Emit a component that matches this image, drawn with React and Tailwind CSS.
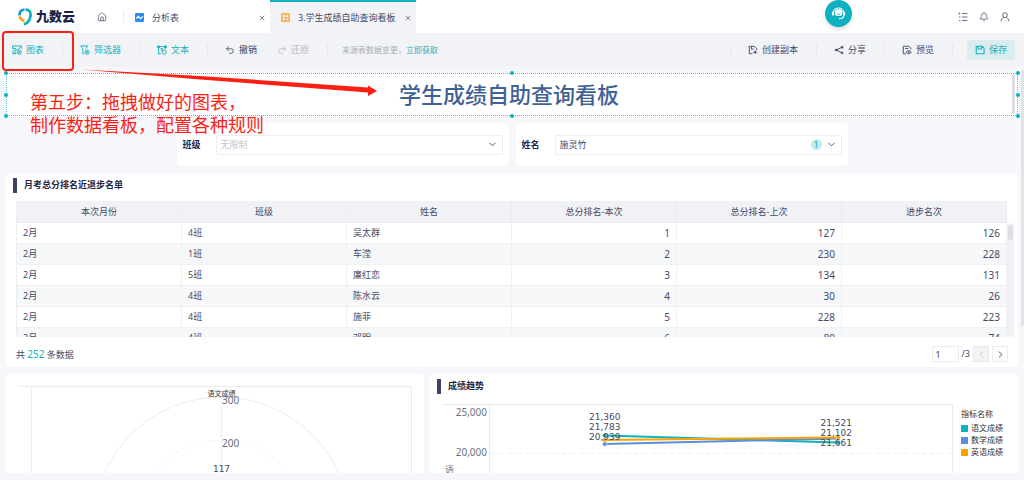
import React, { useState } from 'react';
import { House, Bell, X, Undo2, Redo2, ChevronDown, ChevronLeft, ChevronRight } from 'lucide-react';

const COLUMNS = ['本次月份', '班级', '姓名', '总分排名-本次', '总分排名-上次', '进步名次'];

const ROWS = [
  ['2月', '4班', '吴太群', 1, 127, 126],
  ['2月', '1班', '车滢', 2, 230, 228],
  ['2月', '5班', '廉红恋', 3, 134, 131],
  ['2月', '4班', '陈水云', 4, 30, 26],
  ['2月', '4班', '施菲', 5, 228, 223],
  ['2月', '4班', '邓明', 6, 80, 74],
];

const LEGEND = [
  { name: '语文成绩', color: 'bg-[#0fb1c0]' },
  { name: '数学成绩', color: 'bg-[#5b8fdc]' },
  { name: '英语成绩', color: 'bg-[#ffa200]' },
];

/* ───── ícones ───── */
function Svg({ children, className = 'size-[10px]', width = 1.5 }) {
  return (
    <svg
      viewBox="0 0 16 16"
      fill="none"
      stroke="currentColor"
      strokeWidth={width}
      className={`shrink-0 ${className}`}
      aria-hidden="true"
    >
      {children}
    </svg>
  );
}

const ChartIcon = () => (
  <Svg>
    <path d="M15 6V1.500H1V5.500H5V14M1 14H7M1.500 8.500V14M5 5.500L8.500 8L14 3" />
    <circle cx="11.500" cy="11.500" r="3.300" />
    <path d="M11.500 10V13M10 11.500H13" />
  </Svg>
);

const FilterIcon = () => (
  <Svg>
    <path d="M9.500 6V5L12.500 1.500H1L4.500 6V14H7" />
    <circle cx="11.500" cy="11.500" r="3.300" />
    <path d="M11.500 10V13M10 11.500H13" />
  </Svg>
);

const TextIcon = () => (
  <Svg>
    <path d="M2.500 3.500V14M1 14H6M3 2.500H13V7M5.500 6H10M7.500 6V10" />
    <path d="M1 1.500H4V4H1ZM12 1.500H15V4H12Z" fill="currentColor" />
    <circle cx="11.500" cy="11.500" r="3.300" />
  </Svg>
);

const CopyIcon = () => (
  <Svg>
    <path d="M7 14H2V2H10L14 6V8M5.500 2V6.500H9M8 11.500H14.500M11.500 8.500V14.500" />
  </Svg>
);

const ShareIcon = () => (
  <Svg>
    <path d="M13 3.500L3.500 8L13 12.500" />
    <path d="M2 6.500H5V9.500H2ZM11.500 2H14.500V5H11.500ZM11.500 11H14.500V14H11.500Z" fill="currentColor" strokeWidth="0.500" />
  </Svg>
);

const PreviewIcon = () => (
  <Svg>
    <path d="M6 14H2V2H11L14 5V7M5 5.500H10" />
    <path d="M6.500 11.500C8.500 8.300 13 8.300 15 11.500C13 14.700 8.500 14.700 6.500 11.500Z" />
    <circle cx="10.800" cy="11.500" r="1" />
  </Svg>
);

const SaveIcon = () => (
  <Svg width={1.700}>
    <path d="M2 2H11.500L14.500 5V14H2ZM5 2V6.500H10.500V2" />
  </Svg>
);

const TaskIcon = () => (
  <Svg>
    <path d="M6.500 2.500H15M6.500 8H15M6.500 13.500H15M1 1L3.500 2.500L1 4M1.500 8H4M1.500 13.500H4" />
  </Svg>
);

const UserIcon = () => (
  <Svg>
    <circle cx="8" cy="5" r="3.800" />
    <path d="M1.500 15C2 11.500 4 9.500 6 8.500M14.500 15C14 11.500 12 9.500 10 8.500" />
  </Svg>
);

const Logo = () => (
  <svg viewBox="0 0 28 36" fill="none" strokeWidth="5.500" className="h-[18px] w-[14px]" aria-hidden="true">
    <path d="M3 15C2.500 8 6 3.500 13 3" stroke="#1b96dc" />
    <path d="M15 3C22 3 26 8 25 16C24 24 20 30 12 33" stroke="#12afc1" />
    <path d="M3 17C5 22 8 25 13 26" stroke="#fba026" />
  </svg>
);

/* ───── barra superior ───── */
function Tab({ active, icon, children }) {
  return (
    <div
      className={`flex w-[146px] items-center gap-2 border-t-2 pr-1 pl-[11px] ${
        active ? 'border-[#0fb1c0] bg-[#f1f3f7]' : 'border-transparent'
      }`}
    >
      {icon}
      <a href="#tab" className="flex-1 whitespace-nowrap">
        {children}
      </a>
      <button aria-label="关闭">
        <X className="size-2" />
      </button>
    </div>
  );
}

function Header() {
  return (
    <header className="relative flex h-[33px] bg-white">
      <div className="flex items-center gap-1 pl-[18px]">
        <Logo />
        <span className="text-[13px] font-black text-[#1b1f45]">九数云</span>
      </div>
      <button className="ml-[22px] w-[10px]" aria-label="首页">
        <House className="size-[10px] text-[#5b607c]" />
      </button>
      <span className="my-[10px] ml-4 w-px bg-[#e8eaef]" />
      <Tab
        icon={
          <svg viewBox="0 0 8 8" className="size-[9px]" aria-hidden="true">
            <rect width="8" height="8" rx="1" fill="#2a8cf0" />
            <path d="M1 5L3 3L5 5L7 3" stroke="#fff" fill="none" />
          </svg>
        }
      >
        分析表
      </Tab>
      <Tab
        active
        icon={
          <svg viewBox="0 0 8 8" className="size-[9px]" aria-hidden="true">
            <rect width="8" height="8" rx="1" fill="#fbb04f" />
            <path d="M1.500 1.500H3.500V3.500H1.500ZM4.500 1.500H6.500V4H4.500ZM1.500 4.500H3.500V6.500H1.500ZM4.500 5H6.500V6.500H4.500Z" fill="#fff3dd" />
          </svg>
        }
      >
        3.学生成绩自助查询看板
      </Tab>
      <div className="ml-auto flex items-center gap-[11px] pr-[14px] text-[#5b607c]">
        <button aria-label="任务">
          <TaskIcon />
        </button>
        <button aria-label="通知">
          <Bell className="size-[10px]" />
        </button>
        <button aria-label="账户">
          <UserIcon />
        </button>
      </div>
      <button
        aria-label="客服"
        className="absolute top-0 right-[172px] flex size-[27px] items-center justify-center rounded-full bg-[#0fb1c0] text-white shadow-md"
      >
        <svg viewBox="0 0 16 16" fill="none" stroke="currentColor" className="size-[15px]" aria-hidden="true">
          <rect x="4.500" y="4" width="7" height="6" rx="1.500" fill="currentColor" />
          <path d="M2.500 7C2.500 0.500 13.500 0.500 13.500 7V10C13.500 12.500 11.500 13.500 8.500 13.500" strokeWidth="1.200" />
          <path d="M2 6V10M14 6V10" strokeWidth="2" />
          <path d="M6 8C7 9.200 9 9.200 10 8" stroke="#0fb1c0" />
        </svg>
      </button>
    </header>
  );
}

/* ───── ferramentas ───── */
function Tool({ icon, children, className = '' }) {
  return (
    <button className={`flex items-center gap-1 whitespace-nowrap ${className}`}>
      {icon}
      {children}
    </button>
  );
}

const Divider = () => <span className="mr-[17px] ml-[18px] h-3 w-px bg-[#e6e8ee]" />;

function Toolbar() {
  return (
    <div className="flex h-[34px] items-center bg-[#f1f3f7] pr-[9px] pl-3">
      <Tool icon={<ChartIcon />} className="text-[#18b0be]">图表</Tool>
      <Divider />
      <Tool icon={<FilterIcon />} className="text-[#18b0be]">筛选器</Tool>
      <Divider />
      <Tool icon={<TextIcon />} className="text-[#18b0be]">文本</Tool>
      <Divider />
      <Tool icon={<Undo2 className="size-[10px]" />}>撤销</Tool>
      <Tool icon={<Redo2 className="size-[10px]" />} className="ml-5 text-[#b9bcc8]">还原</Tool>
      <span className="mr-[14px] ml-[18px] h-3 w-px bg-[#e6e8ee]" />
      <p className="text-[8px] whitespace-nowrap text-[#a9adbb]">
        来源表数据变更，<a href="#update" className="text-[#18b0be]">立即获取</a>
      </p>
      <span className="ml-auto" />
      <Divider />
      <Tool icon={<CopyIcon />}>创建副本</Tool>
      <Divider />
      <Tool icon={<ShareIcon />}>分享</Tool>
      <Divider />
      <Tool icon={<PreviewIcon />}>预览</Tool>
      <span className="mr-[14px] ml-[18px] h-3 w-px bg-[#e6e8ee]" />
      <Tool icon={<SaveIcon />} className="h-5 rounded-xs bg-[#d9ecf0] px-2 text-[#18b0be]">保存</Tool>
    </div>
  );
}

/* ───── painel ───── */
const HANDLES = [
  '-top-[3px] -left-[3px]',
  '-top-[3px] left-1/2 -ml-0.5',
  '-top-[3px] -right-[3px]',
  'top-1/2 -mt-0.5 -left-[3px]',
  'top-1/2 -mt-0.5 -right-[3px]',
  '-bottom-[3px] -left-[3px]',
  '-bottom-[3px] left-1/2 -ml-0.5',
  '-bottom-[3px] -right-[3px]',
];

function TitleWidget() {
  return (
    <div className="relative flex h-[43px] items-center justify-center border border-dotted border-[#4cc3cf] bg-white pr-[6px]">
      <h1 className="text-[22px] font-medium text-[#3f6294]">学生成绩自助查询看板</h1>
      <span className="absolute top-0 right-0.5 h-10 w-[3px] rounded-full bg-[#dcdde2]" />
      {HANDLES.map((pos) => (
        <span key={pos} className={`absolute size-1 rounded-full bg-[#0fb1c0] ${pos}`} />
      ))}
    </div>
  );
}

function FilterCard({ id, label, value, muted, count }) {
  return (
    <div className="flex h-[43px] w-[332px] items-center rounded-sm bg-white px-[6px]">
      <label htmlFor={id} className="w-[33px] font-bold text-[#22264a]">
        {label}
      </label>
      <div className="relative flex-1">
        <select
          id={id}
          className={`block h-5 w-full appearance-none rounded-xs border border-[#eceef2] bg-white px-1 ${
            muted ? 'text-[#c3c6d0]' : ''
          }`}
        >
          <option>{value}</option>
        </select>
        <span className="pointer-events-none absolute inset-y-0 right-[5px] flex items-center gap-1">
          {count && (
            <span className="flex size-[11px] items-center justify-center rounded-full bg-[#c5ebef] text-[#18b0be]">
              {count}
            </span>
          )}
          <ChevronDown className="size-[11px]" />
        </span>
      </div>
    </div>
  );
}

function CardTitle({ children }) {
  return (
    <div className="flex h-7 items-center gap-[7px] pb-1 pl-[7px]">
      <span className="h-[15px] w-1 bg-[#3d4266]" />
      <h2 className="font-bold text-[#22264a]">{children}</h2>
    </div>
  );
}

function RankTable() {
  const [page, setPage] = useState(1);

  return (
    <section className="rounded-sm bg-white">
      <CardTitle>月考总分排名近退步名单</CardTitle>
      <div className="flex h-[136px] overflow-hidden pr-1 pl-[10px]">
        <div className="flex-1">
          <table className="w-full table-fixed border-separate border-spacing-0 border-l border-[#eceef2]">
            <thead>
              <tr className="h-[22px] bg-[#f0f2f6]">
                {COLUMNS.map((c) => (
                  <th key={c} className="border-r border-b border-[#eaecf1] p-0 font-normal">
                    {c}
                  </th>
                ))}
              </tr>
            </thead>
            <tbody>
              {ROWS.map((row, i) => (
                <tr key={i} className="h-[21px] odd:bg-white even:bg-[#f5f7f9]">
                  {row.map((cell, j) => (
                    <td
                      key={j}
                      className={`border-r border-b border-[#eff1f4] px-[6px] py-0 ${
                        j > 2 ? 'text-right text-[10px]' : ''
                      }`}
                    >
                      {cell}
                    </td>
                  ))}
                </tr>
              ))}
            </tbody>
          </table>
        </div>
        <div className="mt-[22px] w-[7px] rounded-full bg-[#f2f2f4] px-px pt-0.5">
          <div className="h-[15px] rounded-full bg-[#dedfe3]" />
        </div>
      </div>
      <div className="flex h-[30px] items-center pt-1 pr-[10px] pl-[10px]">
        <p>
          共 <span className="text-[10px] text-[#18b0be]">252</span> 条数据
        </p>
        <input
          aria-label="页码"
          value={page}
          onChange={(e) => setPage(e.target.value)}
          className="ml-auto h-4 w-[27px] border border-[#e9ebef] px-[3px]"
        />
        <span className="mr-[3px] ml-[3px]">/3</span>
        <button aria-label="上一页" disabled className="flex size-4 items-center justify-center border border-[#e6e7eb] bg-[#f3f3f5] text-[#c3c6d0]">
          <ChevronLeft className="size-[11px]" />
        </button>
        <button aria-label="下一页" className="ml-[3px] flex size-4 items-center justify-center border border-[#e9ebef]">
          <ChevronRight className="size-[11px]" />
        </button>
      </div>
    </section>
  );
}

function RadarCard() {
  return (
    <section className="overflow-hidden rounded-t-sm bg-white px-3">
      <svg viewBox="0 0 394 120" className="w-full" fill="none" stroke="#ebecef">
        <path d="M0 12.500H394M13.500 12.500V120M393.500 12.500V120M203.500 23V120" />
        <circle cx="203.500" cy="151" r="128" />
        <circle cx="203.500" cy="151" r="85" stroke="#f2f3f5" strokeDasharray="5 4" />
        <g stroke="none">
          <text x="203.500" y="22" fontSize="7" textAnchor="middle" fill="#333">语文成绩</text>
          <text x="204" y="30" fontSize="10" fill="#6e7079">300</text>
          <text x="204" y="73" fontSize="10" fill="#6e7079">200</text>
          <text x="203.500" y="98" fontSize="9" textAnchor="middle" fill="#454a5c" className="font-['DejaVu_Sans']">
            117
          </text>
        </g>
      </svg>
    </section>
  );
}

function TrendCard() {
  return (
    <section className="overflow-hidden rounded-t-sm bg-white">
      <CardTitle>成绩趋势</CardTitle>
      <div className="flex items-start gap-2 pr-[15px] pl-3">
        <svg viewBox="0 0 512 90" className="min-w-0 flex-1" fill="none" stroke="#e8eaed">
          <path d="M0 2.500H512M47.500 2.500V90M511.500 2.500V90" />
          <path d="M48 51.500H511" stroke="#f0f1f3" strokeDasharray="5 4" />
          <g stroke="none" fontSize="10" fill="#6e7079" textAnchor="end">
            <text x="45" y="14">25,000</text>
            <text x="45" y="54">20,000</text>
            <text x="12" y="71" fontSize="9">语</text>
          </g>
          <g strokeWidth="2">
            <path d="M163 33.500L397 40.500" stroke="#0fb1c0" />
            <path d="M163 42L397 36.500" stroke="#5b8fdc" />
            <path d="M163 38L397 35.500" stroke="#ffa200" />
          </g>
          <g stroke="#fff" strokeWidth="0.500">
            <circle cx="163" cy="33.500" r="2.300" fill="#0fb1c0" />
            <circle cx="397" cy="40.500" r="2.300" fill="#0fb1c0" />
            <circle cx="163" cy="42" r="2.300" fill="#5b8fdc" />
            <circle cx="163" cy="38" r="2.300" fill="#ffa200" />
            <circle cx="397" cy="35.500" r="2.300" fill="#ffa200" />
          </g>
          <g stroke="none" fontSize="9" fill="#454a5c" textAnchor="middle" className="font-['DejaVu_Sans']">
            <text x="163" y="18">21,360</text>
            <text x="163" y="28">21,783</text>
            <text x="163" y="38">20,939</text>
            <text x="395" y="24">21,521</text>
            <text x="395" y="34">21,102</text>
            <text x="395" y="44">21,661</text>
          </g>
        </svg>
        <div className="pt-[6px] text-[8px] leading-3 text-[#333]">
          <p className="mb-0.5">指标名称</p>
          <ul>
            {LEGEND.map((item) => (
              <li key={item.name} className="flex items-center gap-[3px]">
                <span className={`size-[7px] ${item.color}`} />
                {item.name}
              </li>
            ))}
          </ul>
        </div>
      </div>
    </section>
  );
}

/* moldura, seta e texto do passo, por cima da tela */
function StepNote() {
  return (
    <div className="pointer-events-none absolute top-0 left-0 text-[#fb1f14]">
      <div className="absolute top-[31px] left-[2px] h-10 w-[72px] rounded-sm border-2 border-current" />
      <svg viewBox="0 0 300 30" className="absolute top-[69px] left-20 h-[30px] w-[300px]" aria-hidden="true">
        <path d="M1 0.500L120 7L288 18.500L288 16.500L297 22L288 27L288 23.500L120 10.500Z" fill="currentColor" />
      </svg>
      <p className="absolute top-[91px] left-[30px] text-[18px] leading-[23px] whitespace-nowrap">
        第五步：拖拽做好的图表，
        <br />
        制作数据看板，配置各种规则
      </p>
    </div>
  );
}

export default function App() {
  return (
    <div className="relative flex h-screen flex-col overflow-hidden bg-[#f6f7fa] font-['Noto_Sans','Noto_Sans_CJK_SC',sans-serif] text-[9px] text-[#454a66]">
      <Header />
      <Toolbar />
      <main className="relative flex min-h-0 flex-1 flex-col gap-[7px] px-[6px] pt-[6px] pb-[7px]">
        <TitleWidget />
        <div className="flex justify-center gap-[7px]">
          <FilterCard id="class" label="班级" value="无限制" muted />
          <FilterCard id="name" label="姓名" value="施灵竹" count={1} />
        </div>
        <RankTable />
        <div className="grid min-h-0 flex-1 grid-cols-[418fr_588fr] gap-[6px]">
          <RadarCard />
          <TrendCard />
        </div>
        <span className="absolute top-[3px] right-0 h-64 w-[3px] bg-[#e1e3e9]" />
      </main>
      <StepNote />
    </div>
  );
}
